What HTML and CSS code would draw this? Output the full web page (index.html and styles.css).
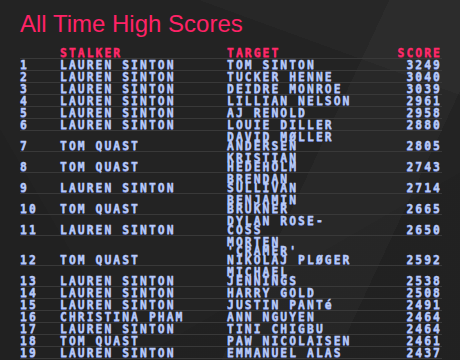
FILE: index.html
```html
<!DOCTYPE html>
<html lang="en">
<head>
<meta charset="utf-8">
<title>All Time High Scores</title>
<link rel="stylesheet" href="styles.css">
</head>
<body>
<main class="page">
  <h1 class="title">All Time High Scores</h1>
  <table class="scores">
    <colgroup>
      <col class="c-rank"><col class="c-stalker"><col class="c-target"><col class="c-score">
    </colgroup>
    <thead>
      <tr><th></th><th>STALKER</th><th>TARGET</th><th class="num">SCORE</th></tr>
    </thead>
    <tbody>
      <tr><td>1</td><td>LAUREN SINTON</td><td>TOM SINTON</td><td class="num">3249</td></tr>
      <tr><td>2</td><td>LAUREN SINTON</td><td>TUCKER HENNE</td><td class="num">3040</td></tr>
      <tr><td>3</td><td>LAUREN SINTON</td><td>DEIDRE MONROE</td><td class="num">3039</td></tr>
      <tr><td>4</td><td>LAUREN SINTON</td><td>LILLIAN NELSON</td><td class="num">2961</td></tr>
      <tr><td>5</td><td>LAUREN SINTON</td><td>AJ RENOLD</td><td class="num">2958</td></tr>
      <tr><td>6</td><td>LAUREN SINTON</td><td>LOUIE DILLER</td><td class="num">2880</td></tr>
      <tr><td>7</td><td>TOM QUAST</td><td>DAVID MØLLER ANDERSEN</td><td class="num">2805</td></tr>
      <tr><td>8</td><td>TOM QUAST</td><td>KRISTIAN HEDEHOLM</td><td class="num">2743</td></tr>
      <tr><td>9</td><td>LAUREN SINTON</td><td>BRENDAN SULLIVAN</td><td class="num">2714</td></tr>
      <tr><td>10</td><td>TOM QUAST</td><td>BENJAMIN BRUKNER</td><td class="num">2665</td></tr>
      <tr><td>11</td><td>LAUREN SINTON</td><td>DYLAN ROSE-COSS</td><td class="num">2650</td></tr>
      <tr><td>12</td><td>TOM QUAST</td><td>MORTEN 'CRAMER' NIKOLAJ PLØGER</td><td class="num">2592</td></tr>
      <tr><td>13</td><td>LAUREN SINTON</td><td>MICHAEL JENNINGS</td><td class="num">2538</td></tr>
      <tr><td>14</td><td>LAUREN SINTON</td><td>HARRY GOLD</td><td class="num">2508</td></tr>
      <tr><td>15</td><td>LAUREN SINTON</td><td>JUSTIN PANTé</td><td class="num">2491</td></tr>
      <tr><td>16</td><td>CHRISTINA PHAM</td><td>ANN NGUYEN</td><td class="num">2464</td></tr>
      <tr><td>17</td><td>LAUREN SINTON</td><td>TINI CHIGBU</td><td class="num">2464</td></tr>
      <tr><td>18</td><td>TOM QUAST</td><td>PAW NICOLAISEN</td><td class="num">2461</td></tr>
      <tr><td>19</td><td>LAUREN SINTON</td><td>EMMANUEL ALAS</td><td class="num">2437</td></tr>
    </tbody>
  </table>
</main>
</body>
</html>
```
FILE: styles.css
```css
html, body {
  margin: 0;
  height: 100%;
}
body {
  background-color: #232323;
  background-image:
    linear-gradient(115deg, rgba(255,255,255,0) 62%, rgba(255,255,255,0.025) 62%, rgba(255,255,255,0.025) 80%, rgba(255,255,255,0) 80%),
    linear-gradient(200deg, rgba(255,255,255,0.02) 18%, rgba(255,255,255,0) 18%),
    linear-gradient(60deg, rgba(0,0,0,0.06) 20%, rgba(0,0,0,0) 20%),
    linear-gradient(150deg, rgba(0,0,0,0) 70%, rgba(0,0,0,0.05) 70%);
  overflow: hidden;
}
.page {
  padding: 10px 18px 0 20px;
}
.title {
  margin: 0 0 9px;
  font-family: "Liberation Sans", Arial, sans-serif;
  font-weight: normal;
  font-size: 24px;
  line-height: 28px;
  color: #ff2266;
}
.scores {
  width: 422px;
  table-layout: fixed;
  border-collapse: collapse;
  font-family: "DejaVu Sans Mono", monospace;
  font-weight: bold;
  font-size: 11.4px;
  line-height: 9px;
  letter-spacing: 2.03px;
  color: #b8caf8;
  -webkit-text-stroke: 0.35px #b8caf8;
  text-shadow: 0 0.7px 0 rgba(88, 108, 200, 0.8);
}
.c-rank { width: 40px; }
.c-stalker { width: 167px; }
.c-target { width: 128px; }
.c-score { width: 87px; }
.scores th {
  color: #ff2a6a;
  -webkit-text-stroke: 0.35px #ff2a6a;
  text-shadow: 0 0.7px 0 rgba(180, 20, 70, 0.7);
  font-weight: bold;
  text-align: left;
}
.scores th,
.scores td {
  padding: 2px 0 0;
  vertical-align: bottom;
}
.scores tr {
  border-bottom: 1px solid #393939;
}
.scores .num {
  text-align: right;
}
```
